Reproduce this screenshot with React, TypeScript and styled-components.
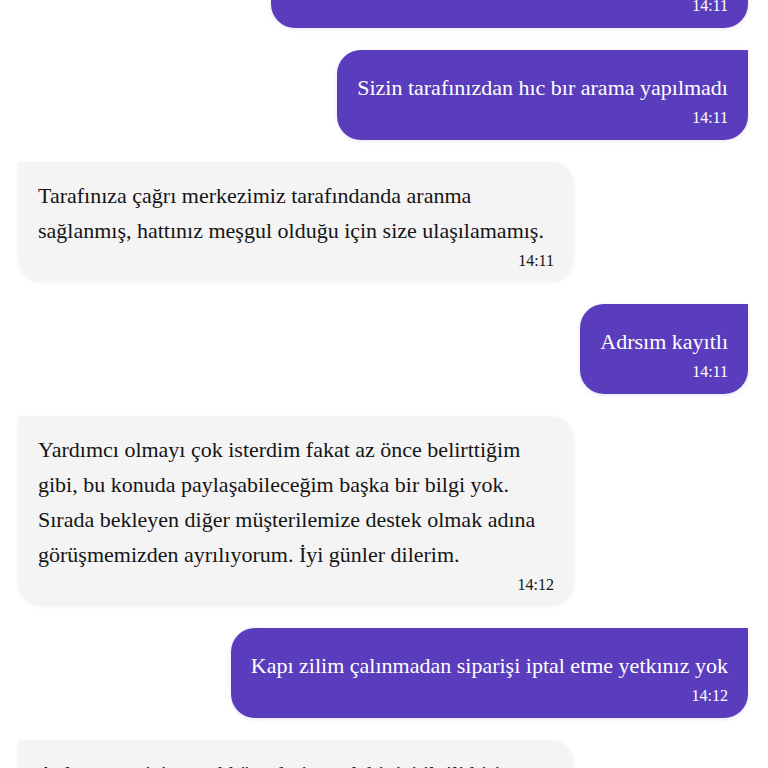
import { useLayoutEffect, useRef } from "react"
import { styled, createGlobalStyle } from "styled-components"

type Message = {
    id: number
    from: "me" | "agent"
    text: string
    time: string
}

const messages: Message[] = [
    { id: 1, from: "me", text: "Beni aradığınızı söylüyorsunuz ama arama yok ki", time: "14:11" },
    { id: 2, from: "me", text: "Sizin tarafınızdan hıc bır arama yapılmadı", time: "14:11" },
    { id: 3, from: "agent", text: "Tarafınıza çağrı merkezimiz tarafındanda aranma sağlanmış, hattınız meşgul olduğu için size ulaşılamamış.", time: "14:11" },
    { id: 4, from: "me", text: "Adrsım kayıtlı", time: "14:11" },
    { id: 5, from: "agent", text: "Yardımcı olmayı çok isterdim fakat az önce belirttiğim gibi, bu konuda paylaşabileceğim başka bir bilgi yok. Sırada bekleyen diğer müşterilemize destek olmak adına görüşmemizden ayrılıyorum. İyi günler dilerim.", time: "14:12" },
    { id: 6, from: "me", text: "Kapı zilim çalınmadan siparişi iptal etme yetkınız yok", time: "14:12" },
    { id: 7, from: "agent", text: "Anlayışınız için teşekkür ederim, talebinizi ilgili birime iletiyorum. Kısa süre içinde size dönüş sağlanacaktır.", time: "14:12" },
]

const App = () => {
    const scrollRef = useRef<HTMLDivElement>(null)

    useLayoutEffect(() => {
        // chat is scrolled a bit, first bubble is half hidden
        if (scrollRef.current) scrollRef.current.scrollTop = 82
    }, [])

    return (
        <>
            <GlobalStyle />
            <ChatWindow ref={scrollRef}>
                <MessageList>
                    {messages.map((m) => (
                        <Bubble key={m.id} $mine={m.from === "me"}>
                            <BubbleText $mine={m.from === "me"}>{m.text}</BubbleText>
                            <Time>{m.time}</Time>
                        </Bubble>
                    ))}
                </MessageList>
            </ChatWindow>
        </>
    )
}

const GlobalStyle = createGlobalStyle`
    html, body {
        margin: 0;
        padding: 0;
        background: #fff;
    }
    body {
        font-family: "Liberation Serif", "Times New Roman", serif;
    }
`

const ChatWindow = styled.div`
    width: 768px;
    height: 768px;
    overflow: hidden;
    background: #fff;
`

const MessageList = styled.div`
    display: flex;
    flex-direction: column;
    gap: 22px;
    padding: 20px 20px 20px 18px;
`

const Bubble = styled.div<{ $mine: boolean }>`
    display: flex;
    flex-direction: column;
    max-width: 556px;
    box-sizing: border-box;
    align-self: ${(p) => (p.$mine ? "flex-end" : "flex-start")};
    padding: ${(p) => (p.$mine ? "20px 20px 9px" : "16px 20px 8px")};
    background: ${(p) => (p.$mine ? "#5a3dbc" : "#f4f4f4")};
    color: ${(p) => (p.$mine ? "#fff" : "#151515")};
    border-radius: ${(p) => (p.$mine ? "24px 0 24px 24px" : "0 24px 24px 24px")};
    box-shadow: ${(p) =>
        p.$mine ? "0 1px 4px rgba(90, 61, 188, 0.15)" : "0 1px 4px rgba(0, 0, 0, 0.05)"};
`

const BubbleText = styled.p<{ $mine: boolean }>`
    margin: 0;
    font-size: 22px;
    line-height: 35px;
    text-align: ${(p) => (p.$mine ? "right" : "left")};
`

const Time = styled.span`
    align-self: flex-end;
    font-size: 16px;
    line-height: 26px;
`

export default App
